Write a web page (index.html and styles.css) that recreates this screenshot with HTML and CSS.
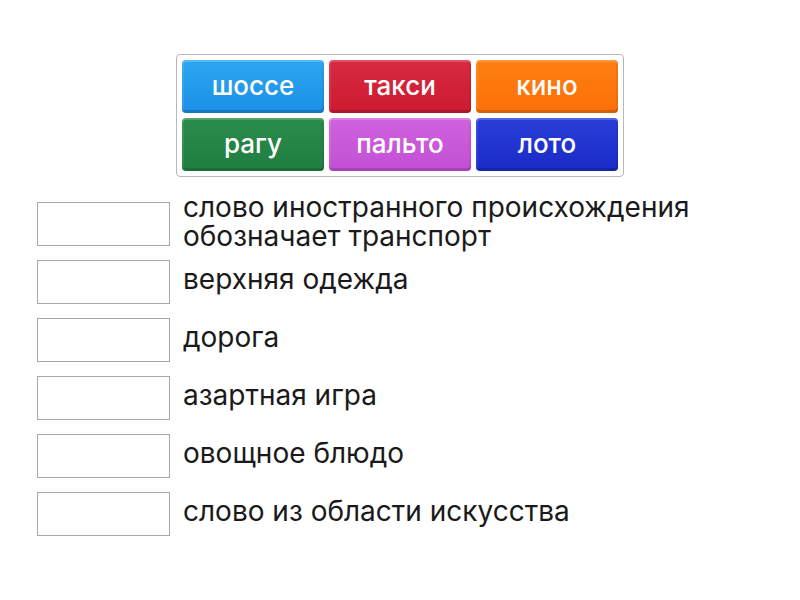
FILE: index.html
```html
<!DOCTYPE html>
<html lang="ru">
<head>
<meta charset="utf-8">
<link rel="stylesheet" href="styles.css">
</head>
<body>
<div class="page">
  <div class="bank">
    <div class="tile blue">шоссе</div>
    <div class="tile red">такси</div>
    <div class="tile orange">кино</div>
    <div class="tile green">рагу</div>
    <div class="tile purple">пальто</div>
    <div class="tile navy">лото</div>
  </div>
  <div class="rows">
    <div class="row"><div class="slot"></div><div class="label">слово иностранного происхождения<br>обозначает транспорт</div></div>
    <div class="row"><div class="slot"></div><div class="label">верхняя одежда</div></div>
    <div class="row"><div class="slot"></div><div class="label">дорога</div></div>
    <div class="row"><div class="slot"></div><div class="label">азартная игра</div></div>
    <div class="row"><div class="slot"></div><div class="label">овощное блюдо</div></div>
    <div class="row"><div class="slot"></div><div class="label">слово из области искусства</div></div>
  </div>
</div>
</body>
</html>
```
FILE: styles.css
```css
html, body {
  margin: 0;
  padding: 0;
  background: #fff;
}
body {
  font-family: Inter, Roboto, sans-serif;
  color: #1a1a1a;
}
.page {
  width: 800px;
  height: 600px;
  display: flex;
  flex-direction: column;
  align-items: flex-start;
}
.bank {
  margin: 54px 0 0 176px;
  width: 436px;
  padding: 5px;
  border: 1px solid #b8b8b8;
  border-radius: 4px;
  display: grid;
  grid-template-columns: repeat(3, 1fr);
  grid-auto-rows: 53px;
  gap: 5px;
}
.tile {
  border-radius: 4px;
  color: #fff;
  font-size: 26px;
  font-weight: 500;
  display: flex;
  align-items: center;
  justify-content: center;
  padding-bottom: 3px;
  box-sizing: border-box;
  box-shadow: inset 0 2px 0 rgba(255,255,255,0.2), inset 2px 0 0 rgba(255,255,255,0.08), inset -2px 0 0 rgba(0,0,0,0.05), inset 0 -3px 0 rgba(0,0,0,0.15);
}
.blue { background: linear-gradient(#2ea6f0, #1a8fe6); }
.red { background: linear-gradient(#d82a42, #cc1a30); }
.orange { background: linear-gradient(#ff7f12, #fa7008); }
.green { background: linear-gradient(#2a8c4c, #1f7e40); }
.purple { background: linear-gradient(#d062df, #c24fd4); }
.navy { background: linear-gradient(#2a3ed8, #1a2ac6); }
.rows {
  margin: 25px 0 0 37px;
  display: flex;
  flex-direction: column;
  gap: 14px;
}
.row {
  height: 44px;
  display: flex;
  align-items: center;
  gap: 13px;
}
.slot {
  width: 133px;
  height: 44px;
  box-sizing: border-box;
  border: 1px solid #a8a8a8;
  flex-shrink: 0;
}
.label {
  font-size: 28px;
  line-height: 29px;
  white-space: nowrap;
  padding-bottom: 5px;
}
```
